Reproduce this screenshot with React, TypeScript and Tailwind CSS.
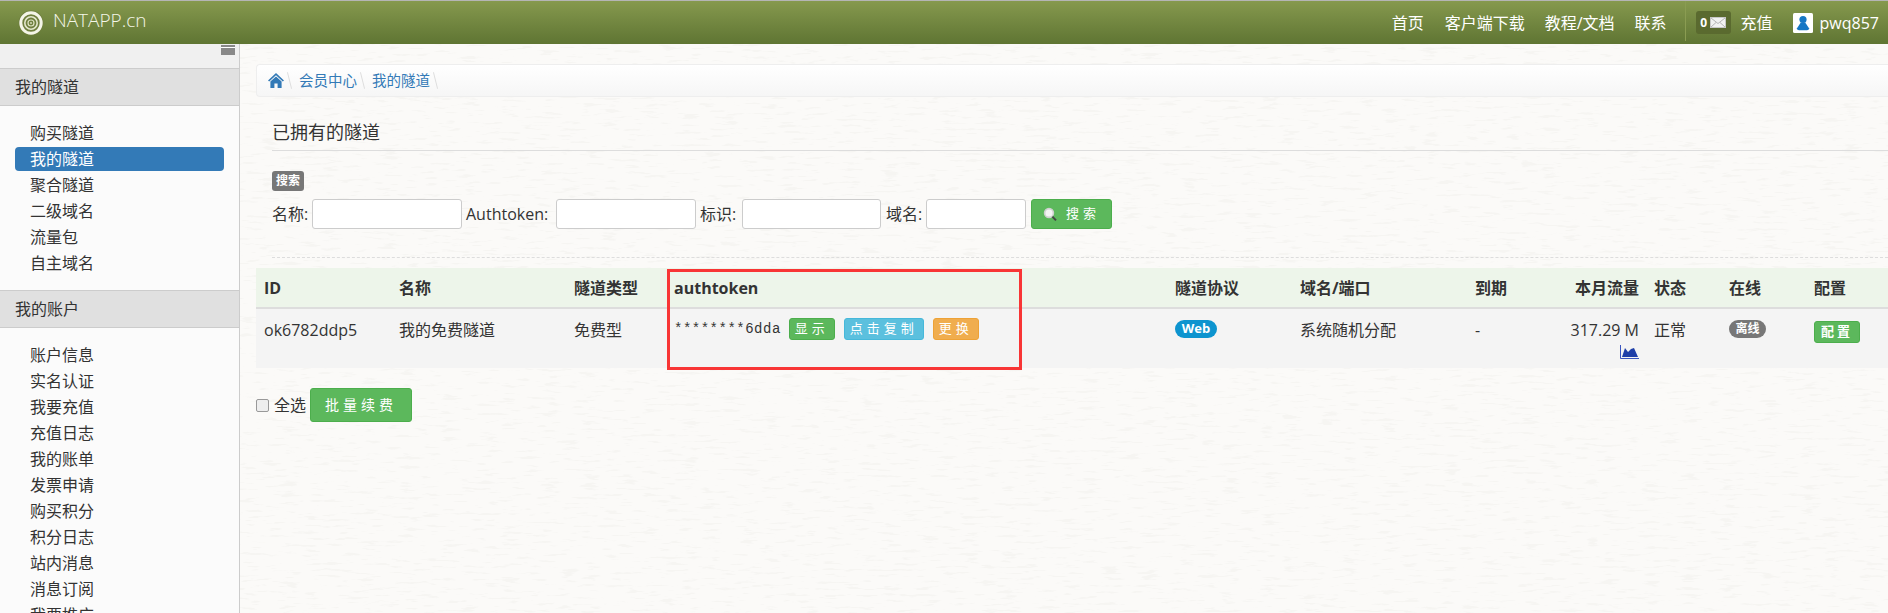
const FONT = "font-['Open_Sans','Noto_Sans_CJK_SC',sans-serif]";

/* ================= DATA ================= */

const TUNNEL_LINKS = ["购买隧道", "我的隧道", "聚合隧道", "二级域名", "流量包", "自主域名"];

const ACCOUNT_LINKS = [
  "账户信息",
  "实名认证",
  "我要充值",
  "充值日志",
  "我的账单",
  "发票申请",
  "购买积分",
  "积分日志",
  "站内消息",
  "消息订阅",
  "我要推广",
];

/* ================= ICONS ================= */

function Logo() {
  return (
    <svg width="26" height="26" viewBox="0 0 26 26" className="ml-[18px]">
      <circle cx="13" cy="13" r="12.5" fill="#6f7f3e" />
      <circle cx="13" cy="13" r="10.2" fill="none" stroke="#f4f5e8" strokeWidth="3" />
      <circle cx="13" cy="13" r="6.2" fill="none" stroke="#e3e7cd" strokeWidth="1.6" />
      <circle cx="13" cy="13" r="3" fill="none" stroke="#dde2c2" strokeWidth="1.2" />
      <circle cx="13" cy="13" r="0.9" fill="#dde2c2" />
    </svg>
  );
}

function HomeIcon() {
  return (
    <svg width="16" height="15" viewBox="0 0 16 15">
      <path d="M8 0 16 7.4 14.8 8.4 8 2.2 1.2 8.4 0 7.4Z M8 3.4 13.6 8.5V15H9.6V10.4H6.4V15H2.4V8.5Z" fill="#337ab7" />
    </svg>
  );
}

function MailIcon() {
  return (
    <svg width="16" height="11" viewBox="0 0 16 11">
      <rect x="0.5" y="0.5" width="15" height="10" fill="#f2f2f2" stroke="#c8c8c8" />
      <path d="M1 1 8 6.5 15 1M1 10 6 5.5M15 10 10 5.5" fill="none" stroke="#b5b5b5" />
    </svg>
  );
}

function UserIcon() {
  return (
    <svg width="20" height="20" viewBox="0 0 20 20">
      <rect width="20" height="20" rx="1.5" fill="#fff" />
      <circle cx="10" cy="6.5" r="3.6" fill="#1677c4" />
      <path d="M7.8 9.6H12.2L16 15.2Q16.2 17.2 14 17.2H6Q3.8 17.2 4 15.2Z" fill="#1677c4" />
    </svg>
  );
}

function SearchIcon() {
  return (
    <svg width="15" height="15" viewBox="0 0 15 15">
      <circle cx="6" cy="6" r="4.4" fill="#f4f4f4" stroke="#d0d0d0" strokeWidth="1.6" />
      <path d="M9.4 9.6 13 13.4" stroke="#444" strokeWidth="2" />
    </svg>
  );
}

function ChartIcon() {
  return (
    <svg width="19" height="14" viewBox="0 0 19 14" className="ml-auto block">
      <path d="M2 12 5 3 8 7 11 4 14 3 18 12Z" fill="#1f3fa8" />
      <path d="M0.5 0V13.5H19" fill="none" stroke="#3a55c0" />
    </svg>
  );
}

/* ================= SIDEBAR ================= */

function NavSection({ title, links, active }: { title: string; links: string[]; active?: string }) {
  return (
    <section>
      <h3 className="flex h-[38px] items-center border-y border-[#ccc] bg-[#e0e0e0] pl-[15px] text-base font-normal text-[#333]">
        {title}
      </h3>
      <ul className="pt-[14px] pb-[14px]">
        {links.map((link) => (
          <li key={link} className="flex h-[26px] items-center">
            <a
              className={
                link === active
                  ? "ml-[15px] flex h-6 w-[209px] items-center rounded-[4px] bg-[#337ab7] pl-[15px] text-base text-white"
                  : "pl-[30px] text-base text-[#333]"
              }
            >
              {link}
            </a>
          </li>
        ))}
      </ul>
    </section>
  );
}

function Sidebar() {
  return (
    <aside className="w-[240px] shrink-0 border-r border-[#ccc] bg-[#fbfbfb]">
      <div className="flex h-[24px] justify-end bg-[#f0f0f0] pt-[1px] pr-[4px]">
        <div className="h-[10px] w-[14px] border-t-[2px] border-[#888] bg-[#888] shadow-[inset_0_1px_0_#fff]" />
      </div>
      <NavSection title="我的隧道" links={TUNNEL_LINKS} active="我的隧道" />
      <NavSection title="我的账户" links={ACCOUNT_LINKS} />
    </aside>
  );
}

/* ================= UI COMPONENTS ================= */

function Header() {
  return (
    <header className="flex h-[44px] items-center border-t border-[#b5b5b5] bg-gradient-to-b from-[#86994e] to-[#5f7533] text-base text-white">
      <Logo />
      <span className="ml-[9px] -mt-[5px] text-[19px] font-light text-[#f4f6e8]">NATAPP.cn</span>
      <nav className="ml-auto flex h-full items-center">
        <a>首页</a>
        <a className="ml-[21px]">客户端下载</a>
        <a className="ml-5">教程/文档</a>
        <a className="ml-[20px]">联系</a>
        <div className="ml-[18px] h-10 w-px self-start bg-[#8a9c52]" />
        <div className="ml-[10px] flex h-[23px] w-[35px] items-center justify-center gap-[3px] rounded-[3px] bg-[#5a6a2f] text-xs font-bold">
          0
          <MailIcon />
        </div>
        <a className="ml-[10px]">充值</a>
        <div className="ml-5">
          <UserIcon />
        </div>
        <a className="ml-[7px] mr-[9px]">pwq857</a>
      </nav>
    </header>
  );
}

function Breadcrumb() {
  return (
    <div className="ml-4 flex h-[33px] items-center rounded-l-[4px] border border-r-0 border-[#eee] bg-gradient-to-b from-white to-[#f6f6f6] pl-[11px] text-[14.5px] text-[#337ab7]">
      <HomeIcon />
      <span className="ml-[5px] mr-[5px] h-[17px] w-px rotate-[-14deg] bg-[#ddd]" />
      <a className="ml-[4px]">会员中心</a>
      <span className="ml-[5px] mr-[5px] h-[17px] w-px rotate-[-14deg] bg-[#ddd]" />
      <a className="ml-[4px]">我的隧道</a>
      <span className="ml-[5px] h-[17px] w-px rotate-[-14deg] bg-[#ddd]" />
    </div>
  );
}

function SearchForm() {
  return (
    <div className="ml-[32px] mt-[20px] border-b border-dashed border-[#ddd] pb-[28px]">
      <span className="flex h-5 w-[32px] items-center justify-center rounded-[3px] bg-[#777] text-[12px] font-bold text-white">
        搜索
      </span>
      <div className="mt-[8px] flex h-[30px] items-center text-base text-[#333]">
        <label className="w-[40px]">名称:</label>
        <input className="h-[30px] w-[150px] rounded-[3px] border border-[#ccc] bg-white" />
        <label className="ml-1 w-[90px]">Authtoken:</label>
        <input className="h-[30px] w-[140px] rounded-[3px] border border-[#ccc] bg-white" />
        <label className="ml-1 w-[42px]">标识:</label>
        <input className="h-[30px] w-[139px] rounded-[3px] border border-[#ccc] bg-white" />
        <label className="ml-[5px] w-[40px]">域名:</label>
        <input className="h-[30px] w-[100px] rounded-[3px] border border-[#ccc] bg-white" />
        <button className="ml-[5px] flex h-[30px] w-[81px] items-center justify-center gap-[8px] rounded-[3px] border border-[#4cae4c] bg-[#5cb85c] text-[13px] tracking-[4px] text-white">
          <SearchIcon />
          搜索
        </button>
      </div>
    </div>
  );
}

function TunnelTable() {
  const th = "px-[7px] text-left text-base font-bold text-[#333]";
  const td = "px-[7px] pt-[9px] align-top text-base text-[#333]";
  return (
    <table className="ml-4 mt-[10px] w-[1632px] table-fixed border-collapse">
      <colgroup>
        <col className="w-[136px]" />
        <col className="w-[175px]" />
        <col className="w-[100px]" />
        <col className="w-[501px]" />
        <col className="w-[125px]" />
        <col className="w-[175px]" />
        <col className="w-[80px]" />
        <col className="w-[98px]" />
        <col className="w-[76px]" />
        <col className="w-[85px]" />
        <col className="w-[81px]" />
      </colgroup>
      <thead>
        <tr className="h-[40px] border-b-2 border-[#ddd] bg-[#edf5ea]">
          <th className="pl-[8px] text-left text-base font-bold text-[#333]">ID</th>
          <th className={th}>名称</th>
          <th className={th}>隧道类型</th>
          <th className={th}>authtoken</th>
          <th className={th}>隧道协议</th>
          <th className={th}>域名/端口</th>
          <th className={th}>到期</th>
          <th className="px-[7px] text-right text-base font-bold text-[#333]">本月流量</th>
          <th className="pl-[8px] text-left text-base font-bold text-[#333]">状态</th>
          <th className={th}>在线</th>
          <th className={th}>配置</th>
        </tr>
      </thead>
      <tbody>
        <tr className="h-[60px] bg-[#f4f4f4]">
          <td className="pl-[8px] pt-[9px] align-top text-base text-[#333]">ok6782ddp5</td>
          <td className={td}>我的免费隧道</td>
          <td className={td}>免费型</td>
          <td className={td}>
            <div className="flex items-center">
              <span className="font-['Liberation_Mono',monospace] text-sm tracking-[0.5px]">********6dda</span>
              <button className="ml-[8px] h-[22px] w-[46px] rounded-[3px] border border-[#4cae4c] bg-[#5cb85c] text-[13px] tracking-[4px] text-white">
                显示
              </button>
              <button className="ml-[9px] h-[22px] w-[80px] rounded-[3px] border border-[#46b8da] bg-[#5bc0de] text-[13px] tracking-[4px] text-white">
                点击复制
              </button>
              <button className="ml-[9px] h-[22px] w-[46px] rounded-[3px] border border-[#eea236] bg-[#f0ad4e] text-[13px] tracking-[4px] text-white">
                更换
              </button>
            </div>
          </td>
          <td className={td}>
            <span className="mt-[2px] flex h-[18px] w-[42px] items-center justify-center rounded-full bg-[#0d94cf] text-[13px] font-bold text-white">
              Web
            </span>
          </td>
          <td className={td}>系统随机分配</td>
          <td className={td}>-</td>
          <td className="px-[7px] pt-[9px] text-right align-top text-base text-[#333]">
            317.29 M
            <div className="mt-[3px]">
              <ChartIcon />
            </div>
          </td>
          <td className="pl-[8px] pt-[9px] align-top text-base text-[#333]">正常</td>
          <td className={td}>
            <span className="mt-[2px] flex h-[18px] w-[37px] items-center justify-center rounded-full bg-[#777] text-xs font-bold text-white">
              离线
            </span>
          </td>
          <td className={td}>
            <button className="h-[22px] w-[46px] rounded-[3px] border border-[#4cae4c] bg-[#5cb85c] text-[13px] font-bold tracking-[3px] text-white">
              配置
            </button>
          </td>
        </tr>
      </tbody>
    </table>
  );
}

function PaperTexture() {
  return (
    <svg className="absolute inset-0 h-full w-full" aria-hidden="true">
      <filter id="paper">
        <feTurbulence type="fractalNoise" baseFrequency="0.05 0.32" numOctaves="3" seed="11" />
        <feColorMatrix values="0 0 0 0 0.7  0 0 0 0 0.7  0 0 0 0 0.66  9 0 0 0 -5.4" />
      </filter>
      <rect width="100%" height="100%" filter="url(#paper)" opacity="0.14" />
    </svg>
  );
}

/* ================= COMPONENT ================= */

export default function App() {
  return (
    <div className={`${FONT} flex h-[613px] w-[1888px] flex-col overflow-hidden`}>
      <Header />
      <div className="flex min-h-0 flex-1">
        <Sidebar />
        <main className="relative min-w-0 flex-1 bg-[#fbfaf8] pt-[20px]">
          <PaperTexture />
          <div className="relative">
            <Breadcrumb />
            <div className="ml-[32px] mt-[22px] flex h-[32px] items-start border-b border-[#ddd] text-[18px] leading-[26px] text-[#333]">
              已拥有的隧道
            </div>
            <SearchForm />
            <TunnelTable />
            <div className="ml-4 mt-[20px] flex items-center text-base text-[#333]">
              <input type="checkbox" className="h-[13px] w-[13px] appearance-none rounded-[2px] border border-[#999] bg-[#eee]" />
              <span className="ml-[5px]">全选</span>
              <button className="ml-[4px] h-[34px] w-[102px] rounded-[3px] border border-[#4cae4c] bg-[#5cb85c] text-sm tracking-[4px] text-white">
                批量续费
              </button>
            </div>
          </div>
          {/* highlight drawn over the authtoken column */}
          <div className="absolute left-[427px] top-[225px] h-[101px] w-[355px] border-[3px] border-[#f83535]" />
        </main>
      </div>
    </div>
  );
}
